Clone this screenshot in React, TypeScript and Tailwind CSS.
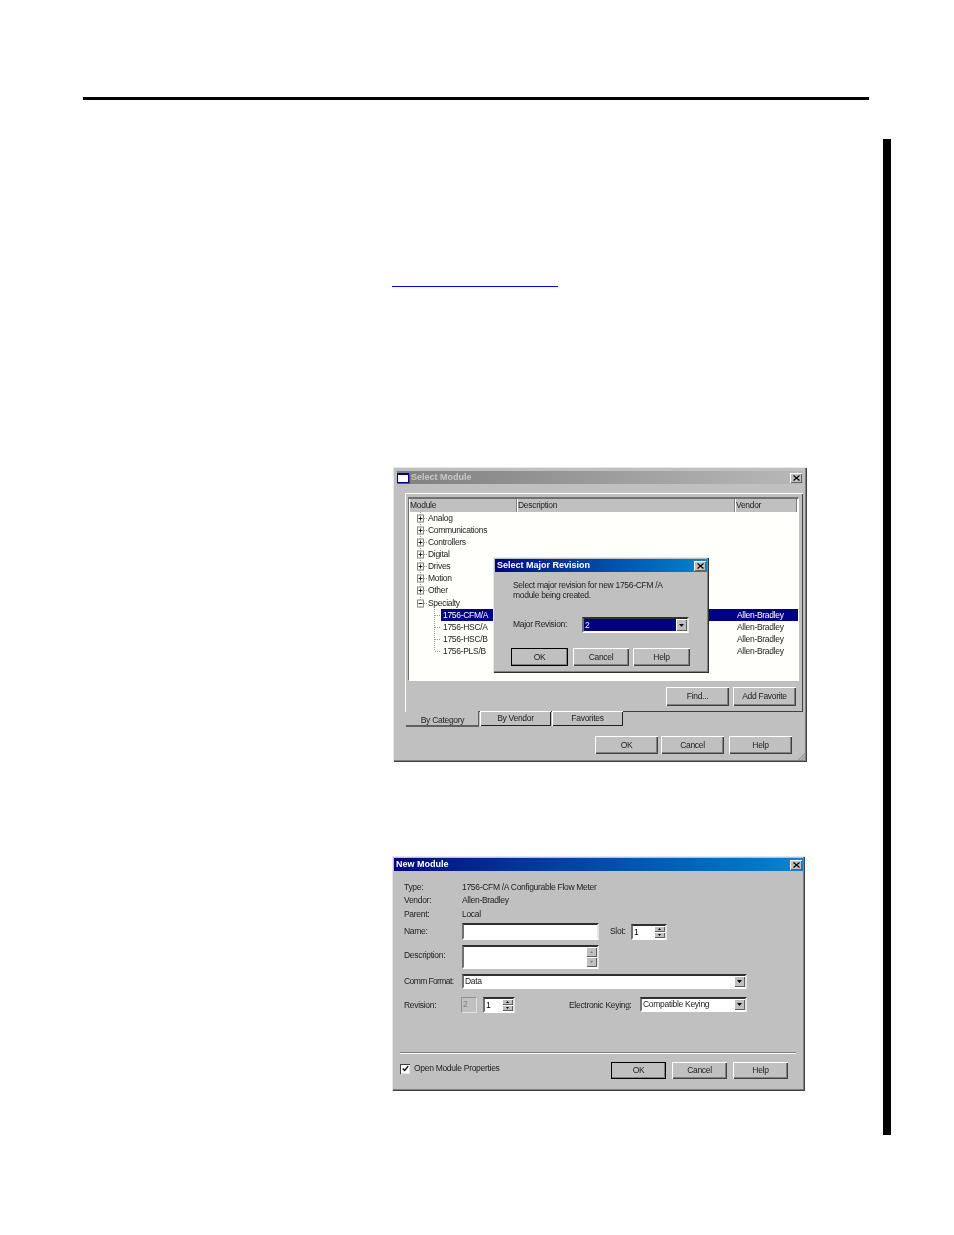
import type { ReactNode } from "react";

const TXT = "text-[8.5px] tracking-[-0.3px] text-[#222]";
const RAISED = "bg-[#c0c0c0] shadow-[inset_1px_1px_0_#fff,inset_-1px_-1px_0_#404040,inset_-2px_-2px_0_#808080]";
const RAISED_SM = "bg-[#c0c0c0] shadow-[inset_1px_1px_0_#fff,inset_-1px_-1px_0_#606060]";
const SUNKEN = "bg-white border-2 border-t-[#303030] border-l-[#707070] border-r-[#e4e4e4] border-b-white";

const TREE = ["Analog", "Communications", "Controllers", "Digital", "Drives", "Motion", "Other"];
const LEAVES = ["1756-CFM/A", "1756-HSC/A", "1756-HSC/B", "1756-PLS/B"];

function Btn({ label, className = "", isDefault = false }: { label: string; className?: string; isDefault?: boolean }) {
  return (
    <div className={`flex items-center justify-center ${TXT} ${RAISED} ${isDefault ? "outline outline-1 -outline-offset-1 outline-black" : ""} ${className}`}>
      {label}
    </div>
  );
}

function CloseBtn() {
  return (
    <div className={`flex items-center justify-center ${RAISED_SM} w-[12px] h-[10px]`}>
      <svg width="7" height="6" viewBox="0 0 7 6">
        <path d="M0.5 0.5L6.5 5.5M6.5 0.5L0.5 5.5" stroke="#000" strokeWidth="1.2" />
      </svg>
    </div>
  );
}

function DropBtn() {
  return (
    <div className={`flex items-center justify-center ${RAISED_SM} w-[11px] h-full`}>
      <svg width="5" height="3" viewBox="0 0 5 3">
        <path d="M0 0H5L2.5 3Z" fill="#000" />
      </svg>
    </div>
  );
}

function SpinBtns({ dim = false }: { dim?: boolean }) {
  const fill = dim ? "#808080" : "#000";
  return (
    <div className="flex flex-col w-[11px] h-full ml-auto">
      <div className={`flex-1 flex items-center justify-center ${RAISED_SM}`}>
        <svg width="3" height="2" viewBox="0 0 3 2"><path d="M1.5 0L3 2H0Z" fill={fill} /></svg>
      </div>
      <div className={`flex-1 flex items-center justify-center ${RAISED_SM}`}>
        <svg width="3" height="2" viewBox="0 0 3 2"><path d="M0 0H3L1.5 2Z" fill={fill} /></svg>
      </div>
    </div>
  );
}

function ExpandBox({ open = false }: { open?: boolean }) {
  return (
    <svg width="11" height="12" viewBox="0 0 11 12" className="shrink-0">
      <path d="M3.5 0V3M3.5 10V12" stroke="#999" strokeDasharray="1 1" />
      <path d="M7 6.5H11" stroke="#999" strokeDasharray="1 1" />
      <rect x="0.5" y="3" width="6" height="7" fill="#fffffb" stroke="#888" />
      <path d="M1.5 6.5H5.5" stroke="#222" />
      {!open && <path d="M3.5 4.5V8.5" stroke="#222" />}
    </svg>
  );
}

function LeafLines({ last = false }: { last?: boolean }) {
  return (
    <svg width="24" height="12" viewBox="0 0 24 12" className="shrink-0">
      <path d={last ? "M17.5 0V6" : "M17.5 0V12"} stroke="#999" strokeDasharray="1 1" />
      <path d="M18 6.5H24" stroke="#999" strokeDasharray="1 1" />
    </svg>
  );
}

function HeaderCell({ label, className = "" }: { label: string; className?: string }) {
  return (
    <div className={`h-full pl-[1px] flex items-center ${TXT} bg-[#c0c0c0] shadow-[inset_1px_0_0_#fff,inset_-1px_0_0_#808080] ${className}`}>
      {label}
    </div>
  );
}

function Tab({ label, className = "" }: { label: string; className?: string }) {
  return (
    <div className={`flex items-center justify-center bg-[#c0c0c0] ${TXT} ${className}`}>{label}</div>
  );
}

function SelectMajorRevision() {
  return (
    <div className="absolute left-[100px] top-[90px] w-[216px] h-[116px] p-[2px] bg-[#c0c0c0] shadow-[inset_1px_1px_0_#e8e8e8,inset_-1px_-1px_0_#303030,inset_-2px_-2px_0_#808080]">
      <div className="h-[13px] flex items-center justify-between pl-[2px] pr-[1px] bg-linear-to-r from-[#000080] to-[#1084d0]">
        <span className="text-[9px] font-bold text-white">Select Major Revision</span>
        <CloseBtn />
      </div>
      <div className={`mt-[8px] ml-[18px] leading-[10px] ${TXT}`}>
        <div>Select major revision for new 1756-CFM /A</div>
        <div>module being created.</div>
      </div>
      <div className="mt-[17px] ml-[18px] flex items-center h-[16px]">
        <span className={`w-[69px] -mt-[1px] ${TXT}`}>Major Revision:</span>
        <div className={`flex w-[107px] h-full ${SUNKEN}`}>
          <div className="flex-1 bg-[#000080] text-white text-[8.5px] pl-[1px] leading-[12px]">2</div>
          <DropBtn />
        </div>
      </div>
      <div className="mt-[15px] ml-[16px] flex">
        <Btn label="OK" isDefault className="w-[57px] h-[18px]" />
        <Btn label="Cancel" className="w-[56px] h-[18px] ml-[5px]" />
        <Btn label="Help" className="w-[57px] h-[18px] ml-[4px]" />
      </div>
    </div>
  );
}

function SelectModuleDialog() {
  return (
    <div className="relative blur-[0.3px] w-[414px] h-[295px] px-[4px] pt-[4px] bg-[#c0c0c0] shadow-[inset_1px_1px_0_#e8e8e8,inset_-1px_-1px_0_#404040,inset_-2px_-2px_0_#808080]">
      {/* Title bar */}
      <div className="h-[13px] flex items-center justify-between pr-[1px] bg-linear-to-r from-[#808080] to-[#b8b8b8]">
        <div className="flex items-center">
          <div className="w-[12px] h-[10px] bg-white border border-[#000080] border-t-2 shadow-[1px_1px_0_#555]" />
          <span className="ml-[2px] text-[9px] font-bold text-[#c8c8c8]">Select Module</span>
        </div>
        <CloseBtn />
      </div>

      {/* Tab panel */}
      <div className="mt-[9px] ml-[8px] w-[398px] h-[219px] pl-[3px] pr-[4px] pt-[4px] shadow-[inset_1px_1px_0_#fff,inset_-1px_-1px_0_#404040]">
        <div className="h-[184px] border border-t-2 border-t-[#707070] border-l-[#707070] border-r-white border-b-white bg-[#fffffb]">
          <div className="flex h-[13px]">
            <HeaderCell label="Module" className="w-[108px]" />
            <HeaderCell label="Description" className="w-[218px]" />
            <HeaderCell label="Vendor" className="flex-1 mr-[1px]" />
          </div>
          <div className={`leading-[12px] ${TXT}`}>
            {TREE.map((name) => (
              <div key={name} className="h-[12px] pl-[8px] flex">
                <ExpandBox />
                <span className="whitespace-nowrap">{name}</span>
              </div>
            ))}
            <div className="h-[12px] mt-[1px] pl-[8px] flex">
              <ExpandBox open />
              <span>Specialty</span>
            </div>
            {LEAVES.map((name, i) => (
              <div key={name} className="h-[12px] flex">
                <div className="w-[327px] pl-[8px] flex">
                  <LeafLines last={i === LEAVES.length - 1} />
                  <span className={`flex-1 pl-[2px] ${i === 0 ? "bg-[#000080] text-white" : ""}`}>{name}</span>
                </div>
                <span className={`flex-1 pl-[1px] ${i === 0 ? "bg-[#000080] text-white" : ""}`}>Allen-Bradley</span>
              </div>
            ))}
          </div>
        </div>
        <div className="mt-[6px] pr-[3px] flex justify-end">
          <Btn label="Find..." className="w-[63px] h-[19px]" />
          <Btn label="Add Favorite" className="w-[63px] h-[19px] ml-[4px]" />
        </div>
      </div>

      {/* Tabs */}
      <div className="ml-[9px] -mt-[1px] flex h-[16px]">
        <Tab label="By Category" className="w-[73px] pt-[3px] h-[16px] shadow-[inset_-1px_-2px_0_#606060]" />
        <Tab label="By Vendor" className="w-[71px] ml-[1px] h-[15px] shadow-[inset_1px_1px_0_#fff,inset_-1px_-1px_0_#202020]" />
        <Tab label="Favorites" className="w-[71px] ml-[1px] h-[15px] shadow-[inset_1px_1px_0_#fff,inset_-1px_-1px_0_#202020]" />
      </div>

      {/* Bottom buttons */}
      <div className="mt-[9px] pr-[11px] flex justify-end">
        <Btn label="OK" className="w-[63px] h-[18px]" />
        <Btn label="Cancel" className="w-[63px] h-[18px] ml-[3px]" />
        <Btn label="Help" className="w-[63px] h-[18px] ml-[5px]" />
      </div>

      {/* Resize grip */}
      <svg width="9" height="9" viewBox="0 0 9 9" className="absolute right-[1px] bottom-[1px]">
        <path d="M8.5 1L1 8.5M8.5 4L4 8.5M8.5 7L7 8.5" stroke="#808080" />
      </svg>

      <SelectMajorRevision />
    </div>
  );
}

function Field({ label, children, className = "" }: { label: string; children: ReactNode; className?: string }) {
  return (
    <div className={`flex items-center ${TXT} ${className}`}>
      <span className="w-[58px] whitespace-nowrap">{label}</span>
      {children}
    </div>
  );
}

function NewModuleDialog() {
  return (
    <div className="blur-[0.3px] w-[413px] h-[235px] p-[2px] bg-[#c0c0c0] shadow-[inset_1px_1px_0_#e8e8e8,inset_-1px_-1px_0_#404040,inset_-2px_-2px_0_#808080]">
      <div className="h-[13px] flex items-center justify-between pl-[2px] pr-[1px] bg-linear-to-r from-[#000080] to-[#1084d0]">
        <span className="text-[9px] font-bold text-white">New Module</span>
        <CloseBtn />
      </div>

      <div className="mt-[10px] pl-[10px]">
        <Field label="Type:" className="h-[13px]"><span>1756-CFM /A Configurable Flow Meter</span></Field>
        <Field label="Vendor:" className="h-[13px]"><span>Allen-Bradley</span></Field>
        <Field label="Parent:" className="h-[14px]"><span>Local</span></Field>

        <Field label="Name:" className="h-[17px] mt-[2px]">
          <div className={`w-[137px] h-full ${SUNKEN}`} />
          <span className="ml-[11px] w-[21px]">Slot:</span>
          <div className={`flex w-[36px] h-[16px] ${SUNKEN}`}>
            <span className="pl-[1px] leading-[12px] text-black">1</span>
            <SpinBtns />
          </div>
        </Field>

        <div className={`flex h-[24px] mt-[5px] ${TXT}`}>
          <span className="w-[58px] mt-[4px]">Description:</span>
          <div className={`flex w-[137px] h-full ${SUNKEN}`}>
            <SpinBtns dim />
          </div>
        </div>

        <div className={`flex items-center h-[15px] mt-[5px] ${TXT}`}>
          <span className="w-[58px] whitespace-nowrap tracking-[-0.6px]">Comm Format:</span>
          <div className={`flex w-[285px] h-full ${SUNKEN}`}>
            <span className="flex-1 pl-[1px] leading-[11px]">Data</span>
            <DropBtn />
          </div>
        </div>

        <Field label="Revision:" className="h-[16px] mt-[8px]">
          <div className="w-[16px] h-full -ml-[1px] border border-[#909090] border-r-[#e0e0e0] border-b-[#e0e0e0] pl-[1px] leading-[12px] text-[#808080]">2</div>
          <div className={`flex w-[32px] h-full ml-[6px] ${SUNKEN}`}>
            <span className="pl-[1px] leading-[12px] text-black">1</span>
            <SpinBtns />
          </div>
          <span className="ml-[54px] w-[71px] whitespace-nowrap">Electronic Keying:</span>
          <div className={`flex w-[107px] h-[15px] self-start ${SUNKEN}`}>
            <span className="flex-1 pl-[1px] leading-[11px]">Compatible Keying</span>
            <DropBtn />
          </div>
        </Field>
      </div>

      <div className="mt-[39px] ml-[6px] w-[396px] h-[2px] bg-[#808080] border-b border-white" />

      <div className="mt-[8px] pl-[6px] pr-[15px] flex items-center justify-between">
        <div className={`flex items-center mb-[4px] ${TXT}`}>
          <div className="w-[10px] h-[10px] flex items-center justify-center bg-white shadow-[inset_1px_1px_0_#404040,inset_-1px_-1px_0_#e4e4e4]">
            <svg width="7" height="7" viewBox="0 0 7 7">
              <path d="M0.8 3.5L2.7 5.5L6.2 1.2" fill="none" stroke="#000" strokeWidth="1.3" />
            </svg>
          </div>
          <span className="ml-[4px]">Open Module Properties</span>
        </div>
        <div className="flex gap-[6px]">
          <Btn label="OK" isDefault className="w-[55px] h-[17px]" />
          <Btn label="Cancel" className="w-[55px] h-[17px]" />
          <Btn label="Help" className="w-[55px] h-[17px]" />
        </div>
      </div>
    </div>
  );
}

export default function App() {
  return (
    <div className="w-[954px] h-[1235px] bg-white overflow-hidden [font-family:'Liberation_Sans',Arial,sans-serif]">
      {/* Header rule */}
      <div className="ml-[83px] mt-[97px] w-[786px] h-[3px] bg-black" />

      <div className="mt-[39px] flex">
        <div className="ml-[392px] w-[491px]">
          {/* Link underline */}
          <div className="mt-[147px] w-[166px] h-px bg-[#0000ff]" />
          <div className="mt-[180px] ml-px">
            <SelectModuleDialog />
          </div>
          <div className="mt-[94px]">
            <NewModuleDialog />
          </div>
        </div>
        {/* Side bar */}
        <div className="w-[8px] h-[996px] bg-black" />
      </div>
    </div>
  );
}
